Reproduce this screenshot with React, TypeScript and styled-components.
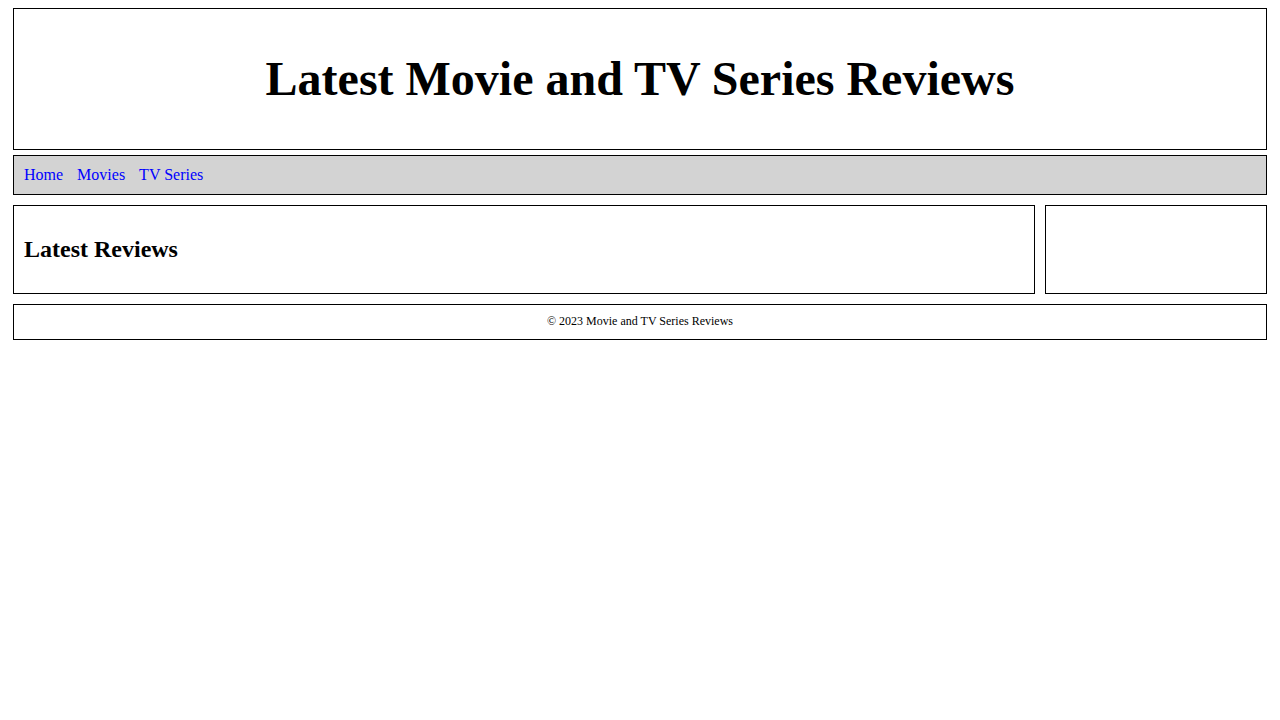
import styled, { createGlobalStyle } from 'styled-components'

const GlobalStyle = createGlobalStyle`
  body {
    margin: 8px;
    font-family: "Liberation Serif", "Times New Roman", serif;
    line-height: 1.15;
    background: #fff;
    color: #000;
  }
`

const Header = styled.header`
  margin: 0 5px 5px;
  padding: 10px;
  border: 1px solid #000;
  text-align: center;
`

const Title = styled.h1`
  font-size: 48px;
  margin: 0.67em 0;
`

const Nav = styled.nav`
  margin: 5px;
  padding: 10px;
  border: 1px solid #000;
  background: lightgrey;
`

const NavList = styled.ul`
  display: flex;
  gap: 14px;
  list-style: none;
  margin: 0;
  padding: 0;
`

const NavLink = styled.a`
  color: #0000ff;
  text-decoration: none;
`

const Content = styled.div`
  display: flex;
`

const Main = styled.main`
  flex: 1;
  margin: 5px;
  padding: 10px;
  border: 1px solid #000;
`

const SectionTitle = styled.h2`
  font-size: 24px;
  margin: 0.83em 0;
`

const Aside = styled.aside`
  width: 200px;
  margin: 5px;
  padding: 10px;
  border: 1px solid #000;
`

const Footer = styled.footer`
  margin: 5px;
  padding: 10px;
  border: 1px solid #000;
  text-align: center;
  font-size: 12px;
`

const links = ['Home', 'Movies', 'TV Series']

export default function App() {
  return (
    <>
      <GlobalStyle />
      <Header>
        <Title>Latest Movie and TV Series Reviews</Title>
      </Header>
      <Nav>
        <NavList>
          {links.map((label) => (
            <li key={label}>
              <NavLink href="#">{label}</NavLink>
            </li>
          ))}
        </NavList>
      </Nav>
      <Content>
        <Main>
          <SectionTitle>Latest Reviews</SectionTitle>
        </Main>
        <Aside />
      </Content>
      <Footer>© 2023 Movie and TV Series Reviews</Footer>
    </>
  )
}
